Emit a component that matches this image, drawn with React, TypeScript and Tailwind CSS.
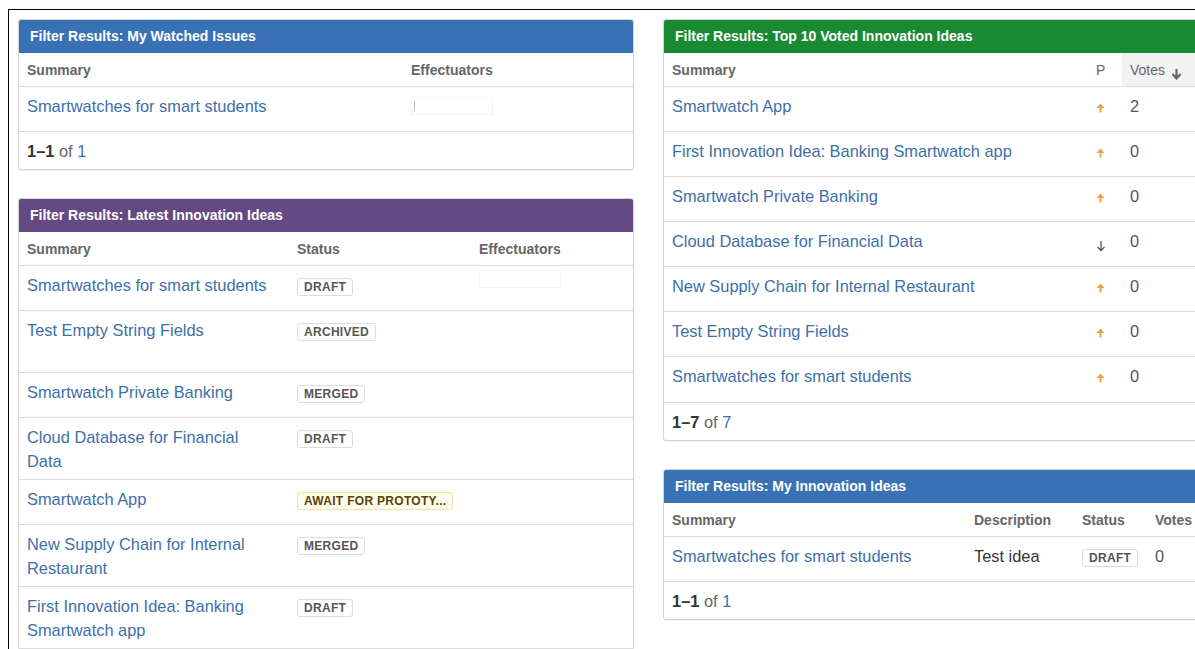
import React from 'react';

type Lozenge = 'plain' | 'yellow';

const font = { fontFamily: '"Liberation Sans", Arial, sans-serif' };

const Badge: React.FC<{ label: string; kind?: Lozenge }> = ({ label, kind = 'plain' }) => (
    <span
        className={`inline-block align-middle rounded-[3px] border px-[6px] text-[12px] leading-[16px] font-bold uppercase tracking-[0.3px] ${
            kind === 'yellow' ? 'border-[#f3e2a0] bg-[#fffdf2] text-[#594300]' : 'border-[#dcdcdc] bg-white text-[#555]'
        }`}
    >
        {label}
    </span>
);

const UpArrow = () => (
    <svg width="9" height="10" viewBox="0 0 9 10" className="inline-block">
        <path d="M4.5 0.5 L8.5 5 L5.5 5 L5.5 9.5 L3.5 9.5 L3.5 5 L0.5 5 Z" fill="#f0a242" />
    </svg>
);

const DownArrow = () => (
    <svg width="10" height="12" viewBox="0 0 10 12" className="inline-block">
        <path d="M5 1 V10 M1.5 7 L5 10.5 L8.5 7" stroke="#555" strokeWidth="1.3" fill="none" />
    </svg>
);

const SortArrow = () => (
    <svg width="11" height="12" viewBox="0 0 11 12" className="ml-[6px] inline-block">
        <path d="M5.5 1 V10 M1.5 6 L5.5 10.5 L9.5 6" stroke="#666" strokeWidth="2.2" fill="none" />
    </svg>
);

const Panel: React.FC<{ title: string; color: string; children: React.ReactNode }> = ({ title, color, children }) => (
    <div className="rounded-[3px] border border-[#d3d3d3] bg-white shadow-[0_1px_1px_rgba(0,0,0,0.06)]">
        <div className={`h-[33px] rounded-t-[2px] px-[11px] pt-[8px] text-[14px] leading-[17px] font-bold text-white ${color}`}>
            {title}
        </div>
        {children}
    </div>
);

const Footer: React.FC<{ from: number; to: number; total: number }> = ({ from, to, total }) => (
    <div className="h-[38px] border-t border-[#dcdcdc] px-[8px] pt-[7px] text-[16.4px] leading-[24px]">
        <span className="font-bold text-[#333]">
            {from}–{to}
        </span>{' '}
        <span className="text-[#666]">of</span> <span className="text-[#3d6fa8]">{total}</span>
    </div>
);

const headCell = 'px-[8px] pt-[8px] text-[14px] leading-[18px] font-bold text-[#666]';
const cell = 'px-[8px] pt-[7px] text-[16.4px] leading-[24px]';
const link = 'text-[#3d6fa8]';

const latestIdeas = [
    { summary: 'Smartwatches for smart students', status: 'Draft', h: 'h-[45px]', eff: true },
    { summary: 'Test Empty String Fields', status: 'Archived', h: 'h-[62px]' },
    { summary: 'Smartwatch Private Banking', status: 'Merged', h: 'h-[45px]' },
    { summary: 'Cloud Database for Financial Data', status: 'Draft', h: 'h-[62px]' },
    { summary: 'Smartwatch App', status: 'Await for prototy...', h: 'h-[45px]', yellow: true },
    { summary: 'New Supply Chain for Internal Restaurant', status: 'Merged', h: 'h-[62px]' },
    { summary: 'First Innovation Idea: Banking Smartwatch app', status: 'Draft', h: 'h-[62px]' },
];

const topVoted = [
    { summary: 'Smartwatch App', up: true, votes: 2 },
    { summary: 'First Innovation Idea: Banking Smartwatch app', up: true, votes: 0 },
    { summary: 'Smartwatch Private Banking', up: true, votes: 0 },
    { summary: 'Cloud Database for Financial Data', up: false, votes: 0 },
    { summary: 'New Supply Chain for Internal Restaurant', up: true, votes: 0 },
    { summary: 'Test Empty String Fields', up: true, votes: 0 },
    { summary: 'Smartwatches for smart students', up: true, votes: 0 },
];

export default function App() {
    return (
        <div className="h-[649px] w-[1195px] overflow-hidden bg-white" style={font}>
            <div className="ml-[8px] mt-[9px] flex h-full gap-[29px] border-l border-t border-black pl-[9px] pt-[9px]">
                {/* left column */}
                <div className="flex w-[616px] shrink-0 flex-col gap-[28px]">
                    <Panel title="Filter Results: My Watched Issues" color="bg-[#3872b4]">
                        <div className="grid h-[34px] grid-cols-[384px_1fr] border-b border-[#dcdcdc]">
                            <div className={headCell}>Summary</div>
                            <div className={headCell}>Effectuators</div>
                        </div>
                        <div className="grid h-[44px] grid-cols-[384px_1fr]">
                            <div className={`${cell} ${link}`}>Smartwatches for smart students</div>
                            <div className="px-[8px] pt-[10px]">
                                <div className="flex h-[18px] w-[82px] items-center border border-[#f4f4f4] pl-[2px]">
                                    <div className="h-[10px] w-px bg-[#bbb]" />
                                </div>
                            </div>
                        </div>
                        <Footer from={1} to={1} total={1} />
                    </Panel>

                    <Panel title="Filter Results: Latest Innovation Ideas" color="bg-[#654982]">
                        <div className="grid h-[34px] grid-cols-[270px_182px_1fr] border-b border-[#dcdcdc]">
                            <div className={headCell}>Summary</div>
                            <div className={headCell}>Status</div>
                            <div className={headCell}>Effectuators</div>
                        </div>
                        {latestIdeas.map((row) => (
                            <div
                                key={row.summary}
                                className={`grid grid-cols-[270px_182px_1fr] border-b border-[#dcdcdc] ${row.h}`}
                            >
                                <div className={`${cell} ${link} pr-[17px]`}>{row.summary}</div>
                                <div className={cell}>
                                    <Badge label={row.status} kind={row.yellow ? 'yellow' : 'plain'} />
                                </div>
                                <div className="px-[8px] pt-[4px]">
                                    {row.eff && <div className="h-[18px] w-[82px] border border-[#f6f6f6]" />}
                                </div>
                            </div>
                        ))}
                    </Panel>
                </div>

                {/* right column */}
                <div className="flex w-[616px] shrink-0 flex-col gap-[28px]">
                    <Panel title="Filter Results: Top 10 Voted Innovation Ideas" color="bg-[#1a8a32]">
                        <div className="grid h-[34px] grid-cols-[424px_34px_1fr] border-b border-[#dcdcdc]">
                            <div className={headCell}>Summary</div>
                            <div className={`${headCell} font-normal`}>P</div>
                            <div className={`${headCell} flex items-start bg-[#f2f2f2] font-normal`}>
                                Votes
                                <span className="mt-[3px]">
                                    <SortArrow />
                                </span>
                            </div>
                        </div>
                        {topVoted.map((row, i) => (
                            <div
                                key={row.summary}
                                className={`grid h-[45px] grid-cols-[424px_34px_1fr] ${i < topVoted.length - 1 ? 'border-b border-[#dcdcdc]' : ''}`}
                            >
                                <div className={`${cell} ${link}`}>{row.summary}</div>
                                <div className={`px-[8px] ${row.up ? 'pt-[8px]' : 'pt-[11px]'}`}>
                                    {row.up ? <UpArrow /> : <DownArrow />}
                                </div>
                                <div className={`${cell} text-[#555]`}>{row.votes}</div>
                            </div>
                        ))}
                        <Footer from={1} to={7} total={7} />
                    </Panel>

                    <Panel title="Filter Results: My Innovation Ideas" color="bg-[#3872b4]">
                        <div className="grid h-[34px] grid-cols-[302px_108px_73px_1fr] border-b border-[#dcdcdc]">
                            <div className={headCell}>Summary</div>
                            <div className={headCell}>Description</div>
                            <div className={headCell}>Status</div>
                            <div className={headCell}>Votes</div>
                        </div>
                        <div className="grid h-[44px] grid-cols-[302px_108px_73px_1fr]">
                            <div className={`${cell} ${link}`}>Smartwatches for smart students</div>
                            <div className={`${cell} text-[#333]`}>Test idea</div>
                            <div className={cell}>
                                <Badge label="Draft" />
                            </div>
                            <div className={`${cell} text-[#555]`}>0</div>
                        </div>
                        <Footer from={1} to={1} total={1} />
                    </Panel>
                </div>
            </div>
        </div>
    );
}
